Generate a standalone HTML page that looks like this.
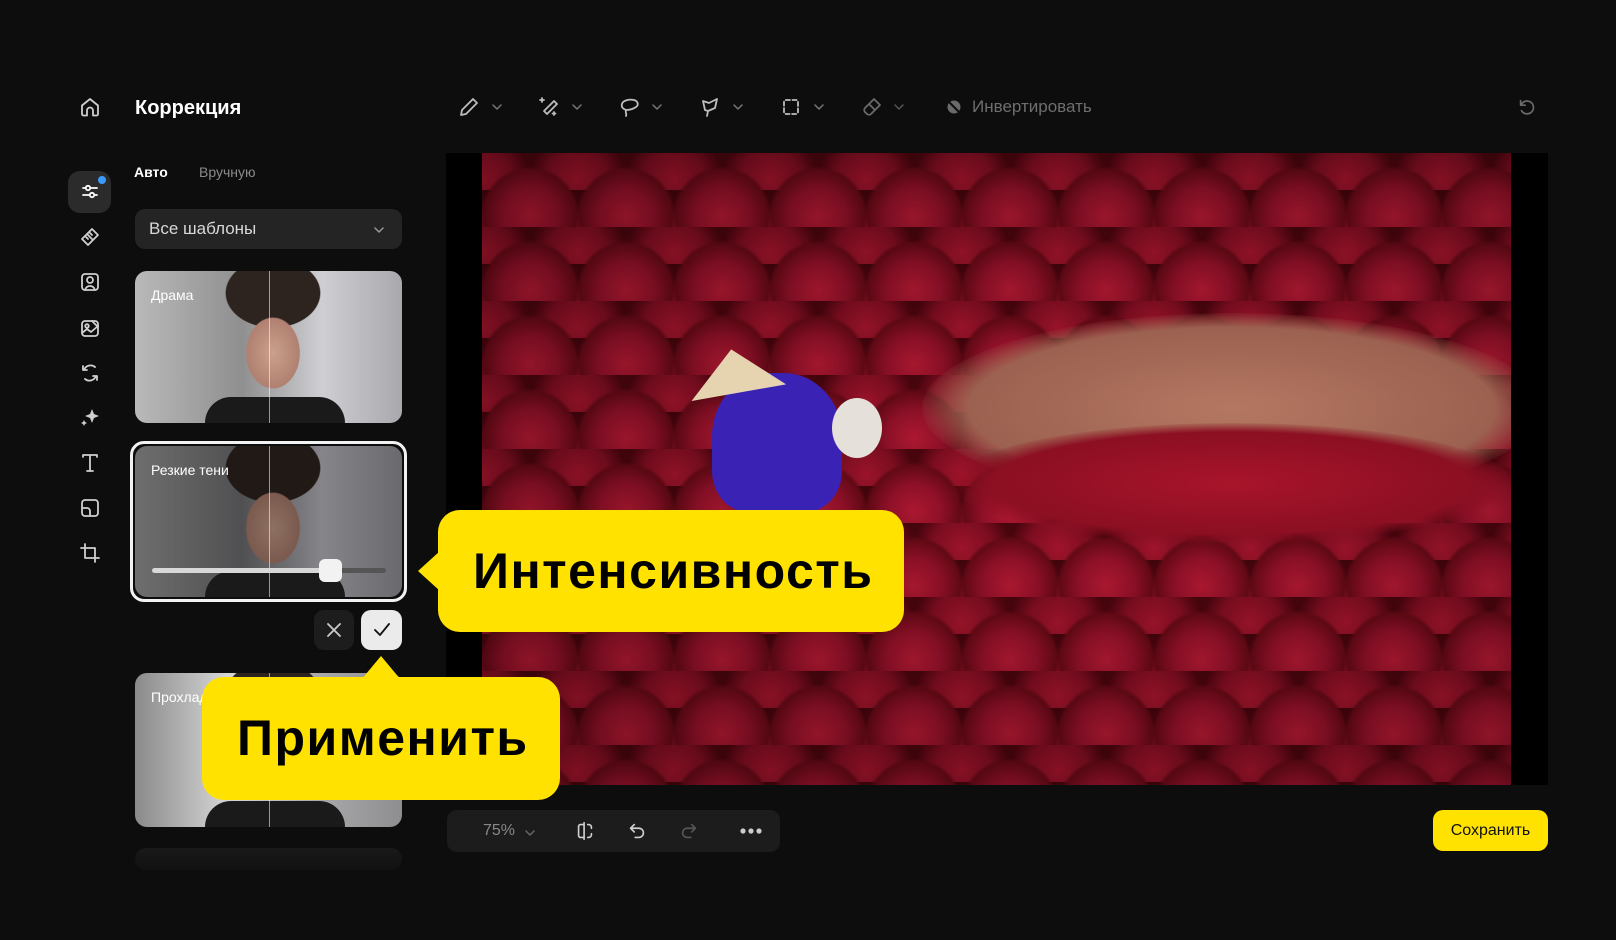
<!DOCTYPE html>
<html><head><meta charset="utf-8"><style>
*{margin:0;padding:0;box-sizing:border-box}
body{width:1616px;height:940px;background:#0d0d0d;position:relative;overflow:hidden;font-family:"Liberation Sans","DejaVu Sans",sans-serif;color:#fff}
.abs{position:absolute}
svg{position:absolute;overflow:visible}
.ic{fill:none;stroke:#cfcfcf;stroke-width:1.8;stroke-linecap:round;stroke-linejoin:round}
.tb{stroke:#bdbdbd}
.chev{fill:none;stroke:#777;stroke-width:1.5;stroke-linecap:round;stroke-linejoin:round}
.card{position:absolute;left:135px;width:267px;border-radius:12px;overflow:hidden;background:linear-gradient(90deg,#b9b9b9,#8f8f90 40%,#cfcfd3 70%,#a9a9ad)}
.face{position:absolute;left:80px;top:0;width:115px;height:100%;background:radial-gradient(ellipse 44px 58px at 58px 82px,#caa18c 0,#b08070 60%,transparent 62%),radial-gradient(ellipse 52px 38px at 58px 22px,#2d2420 0,#2d2420 90%,transparent 92%)}
.body{position:absolute;left:70px;bottom:0;width:140px;height:26px;background:#1a1a1a;border-radius:40px 40px 0 0}
.split{position:absolute;left:134px;top:0;width:1px;height:100%;background:rgba(255,255,255,.55)}
.lbl{position:absolute;left:16px;top:16px;font-size:14px;color:#fff}
.bub{position:absolute;background:#ffe200;border-radius:22px;color:#000;font-weight:bold}
</style></head><body>

<svg width="24" height="24" style="left:78px;top:95px" viewBox="0 0 24 24"><path class="ic" d="M4 10.5L12 4l8 6.5V19a1.5 1.5 0 0 1-1.5 1.5H15v-5a3 3 0 0 0-6 0v5H5.5A1.5 1.5 0 0 1 4 19z"/></svg>
<div class="abs" style="left:135px;top:97px;font-size:20px;font-weight:bold">Коррекция</div>

<svg width="24" height="24" style="left:457px;top:95px" viewBox="0 0 24 24"><path class="ic tb" d="M16 4l4 4L9 19l-5 1 1-5z"/></svg>
<svg width="10" height="6" style="left:492px;top:104px"><path class="chev" d="M1 1l4 4 4-4"/></svg>
<svg width="24" height="24" style="left:537px;top:95px" viewBox="0 0 24 24"><path class="ic tb" d="M17 6l3 3-10 10-3-3zM5 3v4M3 5h4M17 17v3M15.5 18.5h3"/></svg>
<svg width="10" height="6" style="left:572px;top:104px"><path class="chev" d="M1 1l4 4 4-4"/></svg>
<svg width="24" height="24" style="left:618px;top:95px" viewBox="0 0 24 24"><path class="ic tb" d="M8 15c-3-1-5-3-4-6 1-4 8-5 12-4s5 5 2 7-6 3-10 3zM8 15c-1 2 1 4 0 6"/></svg>
<svg width="10" height="6" style="left:652px;top:104px"><path class="chev" d="M1 1l4 4 4-4"/></svg>
<svg width="24" height="24" style="left:699px;top:95px" viewBox="0 0 24 24"><path class="ic tb" d="M4 6l6 2 8-4-2 9-7 3-1 5M4 6l2 9 3 1"/></svg>
<svg width="10" height="6" style="left:733px;top:104px"><path class="chev" d="M1 1l4 4 4-4"/></svg>
<svg width="24" height="24" style="left:779px;top:95px" viewBox="0 0 24 24"><rect class="ic tb" x="5" y="5" width="14" height="14" rx="2" stroke-dasharray="4 2.5"/></svg>
<svg width="10" height="6" style="left:814px;top:104px"><path class="chev" d="M1 1l4 4 4-4"/></svg>
<svg width="24" height="24" style="left:860px;top:95px" viewBox="0 0 24 24"><path class="ic" style="stroke:#6a6a6a" d="M14 4l6 6-9 9a3 3 0 0 1-4 0l-2-2a3 3 0 0 1 0-4zM9 9l6 6"/></svg>
<svg width="10" height="6" style="left:894px;top:104px"><path class="chev" style="stroke:#555" d="M1 1l4 4 4-4"/></svg>
<svg width="18" height="18" style="left:945px;top:98px" viewBox="0 0 18 18"><circle cx="9" cy="9" r="6.5" fill="#6a6a6a"/><path d="M3 3l12 12" stroke="#0d0d0d" stroke-width="2"/></svg>
<div class="abs" style="left:972px;top:97px;font-size:17px;color:#6e6e6e">Инвертировать</div>
<svg width="22" height="22" style="left:1516px;top:96px" viewBox="0 0 24 24"><path class="ic" style="stroke:#6a6a6a" d="M5 5v5h5M5.5 10A7 7 0 1 1 6 16"/></svg>

<div class="abs" style="left:68px;top:171px;width:43px;height:42px;border-radius:12px;background:#2b2b2b"></div>
<div class="abs" style="left:98px;top:176px;width:8px;height:8px;border-radius:50%;background:#3b9cff"></div>
<svg width="24" height="24" style="left:78px;top:180px" viewBox="0 0 24 24"><path class="ic" style="stroke:#fff" d="M5 8h14M5 15h14"/><circle cx="10" cy="8" r="2.2" fill="#2b2b2b" stroke="#fff" stroke-width="1.8"/><circle cx="14" cy="15" r="2.2" fill="#2b2b2b" stroke="#fff" stroke-width="1.8"/></svg>
<svg width="24" height="24" style="left:78px;top:225px" viewBox="0 0 24 24"><path class="ic" d="M14 4l6 6-10 10-6-6zM10 10l4 4M12 8l2 2M8 12l2 2"/></svg>
<svg width="24" height="24" style="left:78px;top:270px" viewBox="0 0 24 24"><rect class="ic" x="4" y="4" width="16" height="16" rx="3"/><circle class="ic" cx="12" cy="10" r="3"/><path class="ic" d="M7 20c1-3 3-4 5-4s4 1 5 4"/></svg>
<svg width="24" height="24" style="left:78px;top:316px" viewBox="0 0 24 24"><rect class="ic" x="4" y="5" width="16" height="15" rx="3"/><circle class="ic" cx="9" cy="10" r="1.8"/><path class="ic" d="M4 17l5-4 4 3 7-6M14 5l6 6"/></svg>
<svg width="24" height="24" style="left:78px;top:361px" viewBox="0 0 24 24"><path class="ic" d="M6 9a7 7 0 0 1 11-3M18 15a7 7 0 0 1-11 3M5 5v4h4M19 19v-4h-4"/></svg>
<svg width="24" height="24" style="left:78px;top:405px" viewBox="0 0 24 24"><path d="M14 4l2 5 5 2-5 2-2 5-2-5-5-2 5-2z M6 15l1 2 2 1-2 1-1 2-1-2-2-1 2-1z" fill="#cfcfcf"/></svg>
<svg width="24" height="24" style="left:78px;top:451px" viewBox="0 0 24 24"><path class="ic" d="M5 6V4h14v2M12 4v16M9 20h6"/></svg>
<svg width="24" height="24" style="left:78px;top:496px" viewBox="0 0 24 24"><rect class="ic" x="4" y="4" width="16" height="16" rx="3"/><path class="ic" d="M4 12h5a3 3 0 0 1 3 3v5"/></svg>
<svg width="24" height="24" style="left:78px;top:541px" viewBox="0 0 24 24"><path class="ic" d="M7 3v14h14M3 7h14v14"/></svg>

<div class="abs" style="left:134px;top:164px;font-size:14px;font-weight:bold">Авто</div>
<div class="abs" style="left:199px;top:164px;font-size:14px;color:#8a8a8a">Вручную</div>
<div class="abs" style="left:135px;top:209px;width:267px;height:40px;border-radius:10px;background:#242424"></div>
<div class="abs" style="left:149px;top:219px;font-size:17px;color:#d8d8d8">Все шаблоны</div>
<svg width="10" height="6" style="left:374px;top:227px"><path class="chev" style="stroke:#999" d="M1 1l4 4 4-4"/></svg>

<div class="card" style="top:271px;height:152px"><div class="face"></div><div class="body"></div><div class="split"></div><div class="lbl">Драма</div></div>

<div class="abs" style="left:130px;top:441px;width:277px;height:161px;border:3px solid #f2f2f2;border-radius:14px"></div>
<div class="card" style="top:446px;height:151px;left:135px;background:linear-gradient(90deg,#6e6e6e,#505052 40%,#85858a 70%,#6a6a6e)"><div class="face" style="filter:brightness(.7)"></div><div class="body"></div><div class="split"></div><div class="lbl">Резкие тени</div></div>
<div class="abs" style="left:152px;top:568px;width:234px;height:5px;border-radius:3px;background:#555"></div>
<div class="abs" style="left:152px;top:568px;width:180px;height:5px;border-radius:3px;background:#d8d8d8"></div>
<div class="abs" style="left:319px;top:559px;width:23px;height:23px;border-radius:6px;background:#f2f2f2"></div>

<div class="abs" style="left:314px;top:610px;width:40px;height:40px;border-radius:10px;background:#1d1d1d"></div>
<svg width="14" height="14" style="left:327px;top:623px"><path d="M1 1l12 12M13 1L1 13" stroke="#ccc" stroke-width="1.8" stroke-linecap="round"/></svg>
<div class="abs" style="left:361px;top:610px;width:41px;height:40px;border-radius:10px;background:#ebebeb"></div>
<svg width="16" height="14" style="left:374px;top:623px"><path d="M1 7l5 5L15 1" stroke="#111" stroke-width="1.8" fill="none" stroke-linecap="round" stroke-linejoin="round"/></svg>

<div class="card" style="top:673px;height:154px;background:linear-gradient(90deg,#8a8a8a,#d6d6d6 35%,#a8a8aa 70%,#8e8e90)"><div class="face"></div><div class="body"></div><div class="split"></div><div class="lbl">Прохладный</div></div>
<div class="card" style="top:848px;height:22px;opacity:.25;background:#666"></div>
<div class="abs" style="left:120px;top:840px;width:300px;height:40px;background:linear-gradient(rgba(13,13,13,.3),#0d0d0d)"></div>

<div class="abs" style="left:446px;top:153px;width:1102px;height:632px;background:#000"></div>
<div class="abs" style="left:482px;top:153px;width:1029px;height:632px;overflow:hidden;background:#5a0712">
  <div class="abs" style="left:0;top:0;width:100%;height:100%;background:
   radial-gradient(circle at 50% 85%,#b81a33 0,#96112a 35%,#6a0a17 58%,transparent 63%) 0 0/96px 74px,
   radial-gradient(circle at 50% 85%,#a8152d 0,#830e22 38%,#4e050e 60%,#3c040a 100%) 48px 37px/96px 74px"></div>
  <div class="abs" style="left:0;top:0;width:100%;height:100%;background:radial-gradient(ellipse 70% 60% at 60% 50%,rgba(0,0,0,0),rgba(0,0,0,.25))"></div>
  <div class="abs" style="left:440px;top:160px;width:620px;height:190px;border-radius:50%;background:radial-gradient(ellipse,#b47862 0,#9c6150 60%,rgba(120,60,50,0) 72%)"></div>
  <div class="abs" style="left:470px;top:270px;width:560px;height:120px;border-radius:50%;background:radial-gradient(ellipse,#a8142b 0,#8c0f22 60%,transparent 72%)"></div>
  <div class="abs" style="left:230px;top:220px;width:130px;height:140px;border-radius:45% 45% 30% 30%;background:#3a22b4"></div>
  <div class="abs" style="left:350px;top:245px;width:50px;height:60px;border-radius:50%;background:#e5e0da"></div>
  <div class="abs" style="left:205px;top:196px;width:0;height:0;border-left:48px solid transparent;border-right:48px solid transparent;border-bottom:44px solid #e6d4b0;transform:rotate(-10deg)"></div>
</div>

<div class="abs" style="left:447px;top:810px;width:333px;height:42px;border-radius:10px;background:#1c1c1c"></div>
<div class="abs" style="left:483px;top:822px;font-size:16px;color:#888">75%</div>
<svg width="10" height="6" style="left:525px;top:830px"><path class="chev" style="stroke:#666" d="M1 1l4 4 4-4"/></svg>
<svg width="22" height="22" style="left:574px;top:820px" viewBox="0 0 24 24"><path class="ic" d="M11 5H7a2 2 0 0 0-2 2v10a2 2 0 0 0 2 2h4zM11 3v18M15 5h1a3 3 0 0 1 3 3v1M19 15v1a3 3 0 0 1-3 3h-1"/></svg>
<svg width="22" height="22" style="left:626px;top:820px" viewBox="0 0 24 24"><path class="ic" d="M9 5L5 9l4 4M5 9h9a5 5 0 0 1 0 10h-4"/></svg>
<svg width="22" height="22" style="left:678px;top:820px" viewBox="0 0 24 24"><path class="ic" style="stroke:#555" d="M15 5l4 4-4 4M19 9h-9a5 5 0 0 0 0 10h4"/></svg>
<svg width="22" height="6" style="left:740px;top:828px"><circle cx="3" cy="3" r="2.6" fill="#ccc"/><circle cx="11" cy="3" r="2.6" fill="#ccc"/><circle cx="19" cy="3" r="2.6" fill="#ccc"/></svg>

<div class="abs" style="left:1433px;top:810px;width:115px;height:41px;border-radius:10px;background:#ffe200;color:#111;font-size:16px;text-align:center;line-height:41px">Сохранить</div>

<svg width="30" height="40" style="left:416px;top:551px"><path d="M24 0L2 20 24 40z" fill="#ffe200"/></svg>
<div class="bub" style="left:438px;top:510px;width:466px;height:122px;font-size:50px;letter-spacing:1.5px;line-height:122px;padding-left:35px;white-space:nowrap">Интенсивность</div>
<svg width="40" height="26" style="left:361px;top:656px"><path d="M20 0L0 24h40z" fill="#ffe200"/></svg>
<div class="bub" style="left:202px;top:677px;width:358px;height:123px;font-size:50px;letter-spacing:1.5px;line-height:123px;padding-left:35px;white-space:nowrap">Применить</div>
</body></html>
